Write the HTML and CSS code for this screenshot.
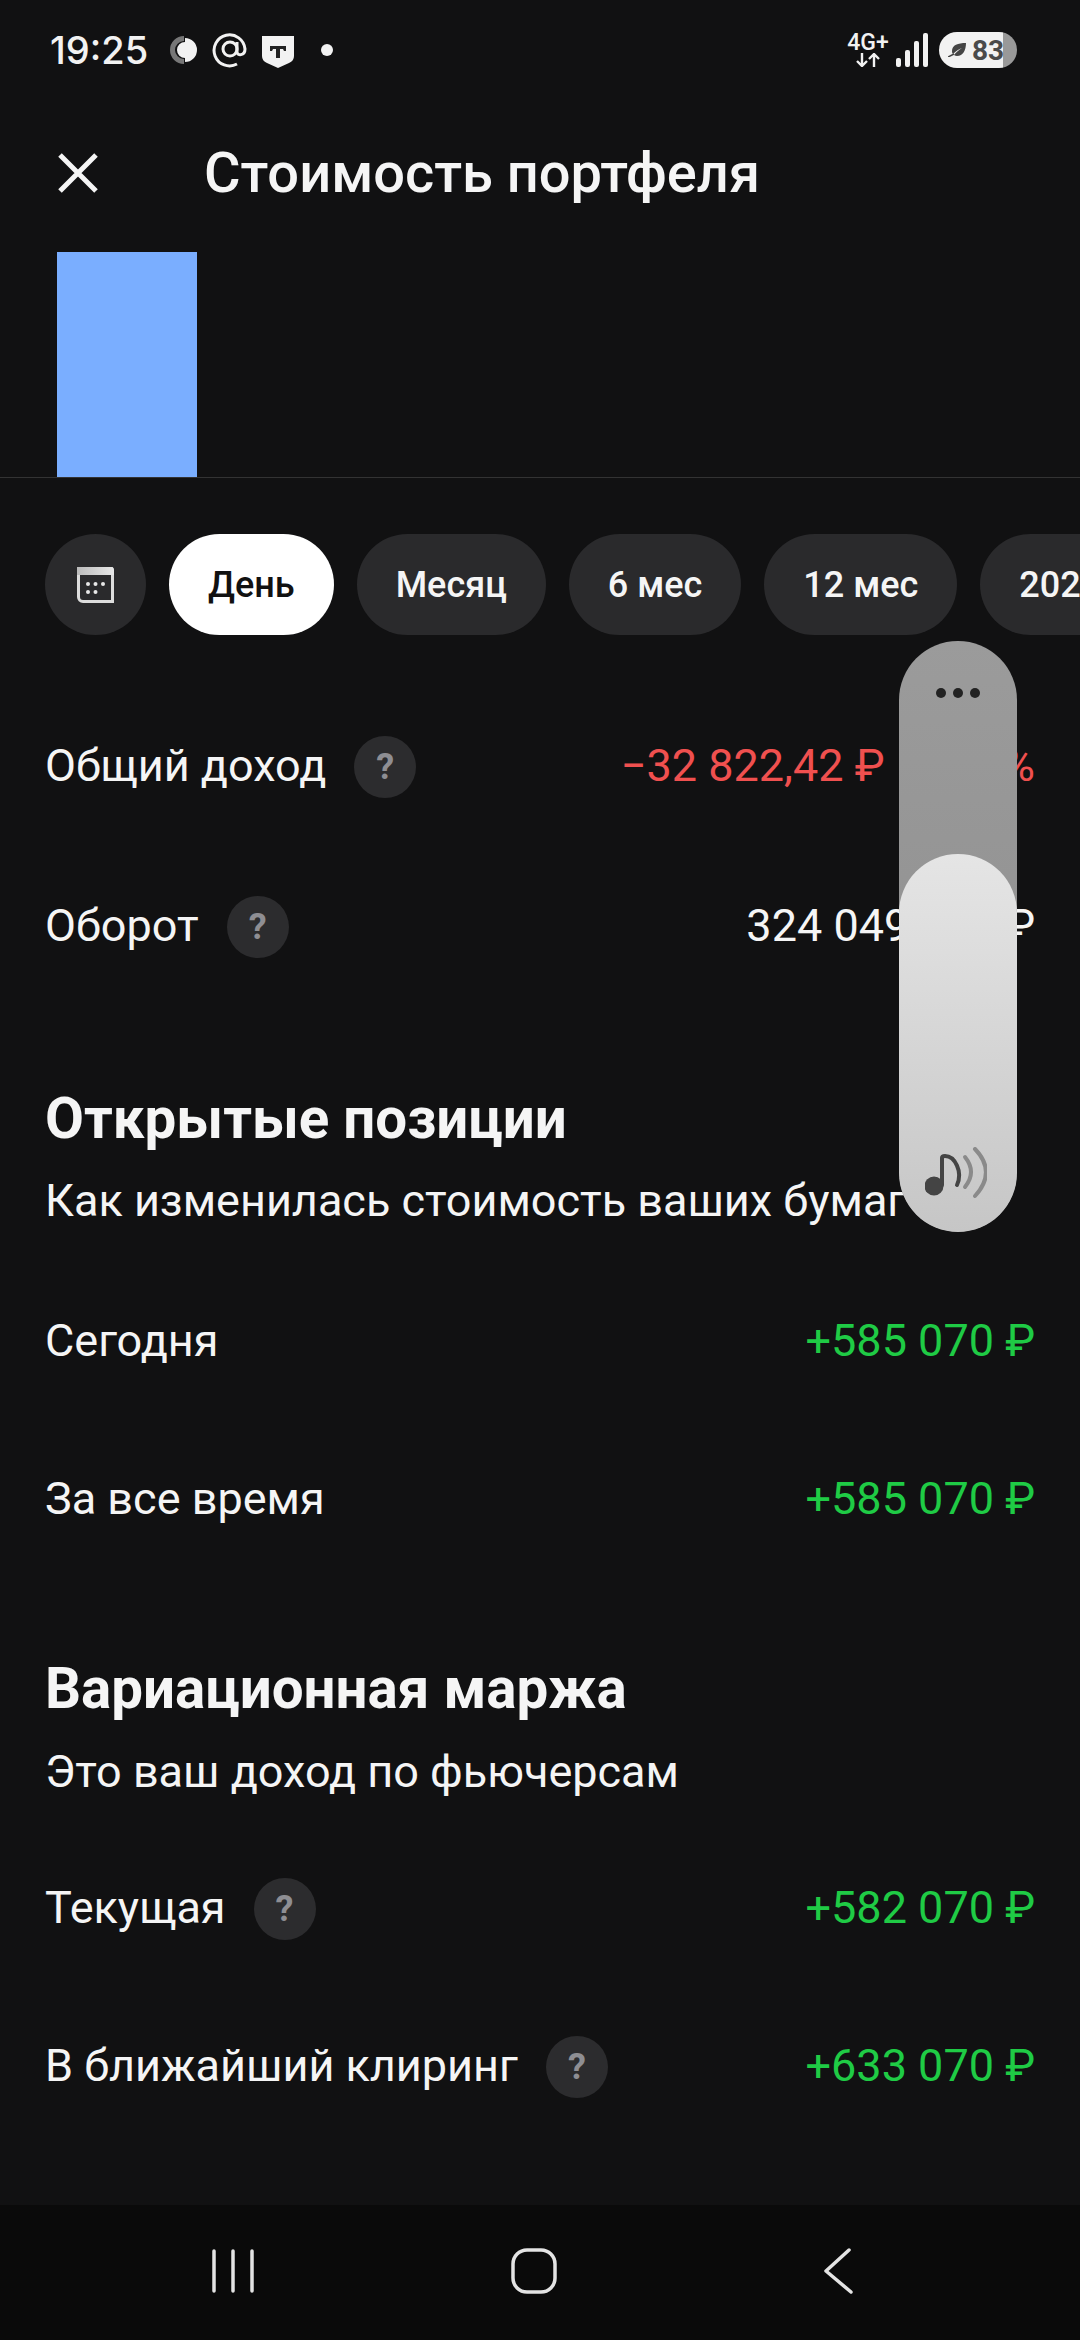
FILE: index.html
```html
<!DOCTYPE html>
<html lang="ru">
<head>
    <meta charset="UTF-8">
    <meta name="viewport" content="width=device-width, initial-scale=1.0">
    <title>Стоимость портфеля</title>
    <link rel="stylesheet" href="styles.css">
</head>
<body>
    <div class="screen">
        <div class="status">
            <span class="time">19:25</span>
            <svg class="st-ring" viewBox="0 0 28 28">
                <path d="M15 0a14 14 0 0 0 0 28v-5a9 9 0 0 1 0-18z" fill="#777"/>
                <path d="M16 2a12 12 0 0 1 0 24v-4a8 8 0 0 1 0-16z" fill="#f2f2f2"/>
            </svg>
            <svg class="st-at" viewBox="0 0 36 36" fill="none" stroke="#f2f2f2" stroke-width="3">
                <circle cx="18" cy="17" r="7"/>
                <path d="M25 10v10c0 4 8 4 8-3A15.500 15.500 0 1 0 25 32"/>
            </svg>
            <svg class="st-shield" viewBox="0 0 32 32">
                <path d="M0 0h32v20q0 5-5 7l-11 5-11-5q-5-2-5-7z" fill="#f2f2f2"/>
                <path d="M8 10h16v5h-2l-1-2h-3v9h-4v-9h-3l-1 2H8z" fill="#222"/>
            </svg>
            <span class="st-dot"></span>
            <div class="status-right">
                <div class="net">
                    <span class="net-label">4G+</span>
                    <svg class="net-arrows" viewBox="0 0 24 14" fill="none" stroke="#f2f2f2" stroke-width="2.400">
                        <path d="M6 0v12M1 8l5 5 5-5M18 14V2M13 6l5-5 5 5"/>
                    </svg>
                </div>
                <div class="signal">
                    <span class="bar-1"></span>
                    <span class="bar-2"></span>
                    <span class="bar-3"></span>
                    <span class="bar-4"></span>
                </div>
                <div class="battery">
                    <svg class="leaf" viewBox="0 0 18 14">
                        <path d="M18 0C10 0 4 2 4 8c0 1 0 2 1 3 3-3 6-5 9-6-3 2-6 4-8 7 1 .5 2 1 3 1 6 0 9-6 9-13z" fill="#444"/>
                        <path d="M6 11l-6 3" stroke="#444" stroke-width="1.500"/>
                    </svg>
                    <span>83</span>
                </div>
            </div>
        </div>

        <div class="topbar">
            <svg class="close" viewBox="0 0 40 40" fill="none" stroke="#f5f5f5" stroke-width="5">
                <path d="M2 2l36 36M38 2L2 38"/>
            </svg>
            <h1>Стоимость портфеля</h1>
        </div>

        <div class="chart">
            <div class="chart-bar"></div>
        </div>

        <div class="chips">
            <div class="chip chip-icon">
                <svg viewBox="0 0 37 36">
                    <defs>
                        <linearGradient id="calTop" x1="0" y1="0" x2="1" y2="0">
                            <stop offset="0" stop-color="#bbb"/>
                            <stop offset="1" stop-color="#e8e8e8"/>
                        </linearGradient>
                    </defs>
                    <path d="M1.500 2v28a4.500 4.500 0 0 0 4.500 4.500h29.500V3a2 2 0 0 0-2-2H1.500z" fill="none" stroke="#ddd" stroke-width="3"/>
                    <path d="M0 0h33a4 4 0 0 1 4 4v4H0z" fill="url(#calTop)"/>
                    <g fill="#e8e8e8">
                        <circle cx="11" cy="17" r="2"/>
                        <circle cx="18.500" cy="17" r="2"/>
                        <circle cx="26" cy="17" r="2"/>
                        <circle cx="11" cy="25" r="2"/>
                        <circle cx="18.500" cy="25" r="2"/>
                    </g>
                </svg>
            </div>
            <div class="chip chip-active">День</div>
            <div class="chip">Месяц</div>
            <div class="chip">6 мес</div>
            <div class="chip">12 мес</div>
            <div class="chip">2024</div>
        </div>

        <div class="rows rows-first">
            <div class="row">
                <div class="row-label">Общий доход <span class="help">?</span></div>
                <div class="red">−32 822,42 ₽<span class="percent">· 9,1 %</span></div>
            </div>
            <div class="row">
                <div class="row-label">Оборот <span class="help">?</span></div>
                <div>324 049,000 ₽</div>
            </div>
        </div>

        <div class="section">
            <h2>Открытые позиции</h2>
            <p>Как изменилась стоимость ваших бумаг</p>
        </div>
        <div class="rows">
            <div class="row">
                <div class="row-label">Сегодня</div>
                <div class="green">+585 070 ₽</div>
            </div>
            <div class="row">
                <div class="row-label">За все время</div>
                <div class="green">+585 070 ₽</div>
            </div>
        </div>

        <div class="section section-tight">
            <h2>Вариационная маржа</h2>
            <p>Это ваш доход по фьючерсам</p>
        </div>
        <div class="rows">
            <div class="row">
                <div class="row-label">Текущая <span class="help">?</span></div>
                <div class="green">+582 070 ₽</div>
            </div>
            <div class="row">
                <div class="row-label">В ближайший клиринг <span class="help">?</span></div>
                <div class="green">+633 070 ₽</div>
            </div>
        </div>

        <div class="navbar">
            <svg class="nav-menu" viewBox="0 0 42 44" fill="none" stroke="#e4e4e4" stroke-width="3.500" stroke-linecap="round">
                <path d="M2 2v40M21 2v40M40 2v40"/>
            </svg>
            <svg class="nav-home" viewBox="0 0 46 46" fill="none" stroke="#e4e4e4" stroke-width="3.500">
                <rect x="2" y="2" width="42" height="42" rx="14"/>
            </svg>
            <svg class="nav-back" viewBox="0 0 30 46" fill="none" stroke="#e4e4e4" stroke-width="3.500" stroke-linecap="round" stroke-linejoin="round">
                <path d="M26 2L3 23l25 21"/>
            </svg>
        </div>

        <!-- volume panel sits over the page -->
        <div class="volume">
            <div class="volume-dots"><span></span><span></span><span></span></div>
            <div class="volume-fill">
                <svg class="volume-icon" viewBox="0 0 62 52" fill="none" stroke-linecap="round">
                    <circle cx="9" cy="39" r="9.500" fill="#444"/>
                    <path d="M17 38V11q0-2 3-2c10 0 18 16 12 29" stroke="#444" stroke-width="4"/>
                    <path d="M40 10q12 15 0 30" stroke="#8a8a8a" stroke-width="4"/>
                    <path d="M50 2q22 23 0 47" stroke="#8a8a8a" stroke-width="4"/>
                </svg>
            </div>
        </div>
    </div>
</body>
</html>
```

FILE: styles.css
```css
* {
    box-sizing: border-box;
}
body {
    margin: 0;
    background-color: #111112;
    font-family: Roboto, "Noto Sans", sans-serif;
    color: #f5f5f5;
}
.screen {
    position: relative;
    width: 1080px;
    height: 2340px;
    overflow: hidden;
    display: flex;
    flex-direction: column;
    background-color: #111112;
}

/* status bar */
.status {
    height: 100px;
    flex-shrink: 0;
    display: flex;
    align-items: center;
    padding: 0 63px 0 50px;
}
.time {
    font-family: Inter, Roboto, sans-serif;
    font-size: 38px;
    font-weight: 500;
    color: #f2f2f2;
    width: 119px;
}
.st-ring {
    width: 28px;
    height: 28px;
    margin-right: 15px;
}
.st-at {
    width: 36px;
    height: 36px;
    margin-right: 14px;
}
.st-shield {
    width: 32px;
    height: 32px;
    margin-top: 4px;
}
.st-dot {
    width: 12px;
    height: 12px;
    margin-left: 27px;
    border-radius: 50%;
    background: #f2f2f2;
}
.status-right {
    margin-left: auto;
    display: flex;
    align-items: center;
}
.net {
    width: 42px;
    display: flex;
    flex-direction: column;
    align-items: center;
    margin-right: 7px;
}
.net-label {
    font-size: 23px;
    line-height: 20px;
    font-weight: 500;
    color: #f2f2f2;
}
.net-arrows {
    width: 24px;
    height: 14px;
}
.signal {
    display: flex;
    align-items: flex-end;
    gap: 4px;
    height: 34px;
    margin-right: 11px;
}
.signal span {
    width: 5px;
    background: #f2f2f2;
    border-radius: 2px;
}
.bar-1 { height: 9px; }
.bar-2 { height: 17px; }
.bar-3 { height: 26px; }
.bar-4 { height: 34px; }
.battery {
    width: 78px;
    height: 36px;
    border-radius: 18px;
    background: linear-gradient(to right, #f2f2f2 82%, #999 82%);
    display: flex;
    align-items: center;
    padding-left: 9px;
    gap: 6px;
    font-size: 28px;
    font-weight: 700;
    color: #4a4a4a;
}
.leaf {
    width: 18px;
    height: 14px;
}

/* header */
.topbar {
    height: 152px;
    flex-shrink: 0;
    display: flex;
    align-items: center;
    padding: 0 0 6px 58px;
}
.close {
    width: 40px;
    height: 40px;
}
h1 {
    margin: 0 0 0 106px;
    font-size: 56px;
    font-weight: 500;
    color: #f5f5f5;
}
.chart {
    height: 226px;
    flex-shrink: 0;
    padding-left: 57px;
    border-bottom: 1px solid #333;
}
.chart-bar {
    width: 140px;
    height: 225px;
    background-color: #7aaeff;
}

/* period chips */
.chips {
    display: flex;
    gap: 23px;
    padding: 56px 0 0 45px;
    flex-shrink: 0;
}
.chip {
    height: 101px;
    padding: 0 39px;
    flex-shrink: 0;
    display: flex;
    align-items: center;
    border-radius: 51px;
    background-color: #2a2a2c;
    font-size: 36px;
    font-weight: 500;
}
.chip-icon {
    width: 101px;
    padding: 0;
    justify-content: center;
}
.chip-icon svg {
    width: 37px;
    height: 36px;
}
.chip-active {
    background-color: #fff;
    color: #111;
}

/* rows */
.rows {
    flex-shrink: 0;
}
.rows-first {
    margin-top: 50px;
    margin-bottom: 2px;
}
.row {
    height: 158px;
    display: flex;
    align-items: center;
    justify-content: space-between;
    padding: 0 45px;
    font-size: 45px;
}
.rows-first .row {
    height: 160px;
}
.row-label {
    display: flex;
    align-items: center;
    gap: 28px;
}
.help {
    width: 62px;
    height: 62px;
    margin-top: 4px;
    display: flex;
    align-items: center;
    justify-content: center;
    border-radius: 50%;
    background-color: #2c2c2e;
    color: #8e8e93;
    font-size: 36px;
    font-weight: 700;
}
.percent {
    margin-left: 24px;
}
.red {
    color: #f0504f;
}
.green {
    color: #1fcb45;
}

/* section titles */
.section {
    flex-shrink: 0;
    margin-top: 82px;
    margin-bottom: 30px;
}
.section-tight {
    margin-bottom: 26px;
}
.section-tight p {
    padding-top: 1px;
}
.section h2 {
    margin: 0 0 22px;
    padding-left: 45px;
    font-size: 56.500px;
    line-height: 60px;
    font-weight: 700;
    color: #f5f5f5;
}
.section p {
    margin: 0;
    padding-left: 45px;
    font-size: 45px;
    line-height: 60px;
}

/* nav bar */
.navbar {
    margin-top: auto;
    height: 135px;
    flex-shrink: 0;
    display: flex;
    align-items: center;
    background-color: #0a0a0a;
    padding: 0 0 4px 212px;
}
.nav-menu {
    width: 42px;
    height: 44px;
}
.nav-home {
    width: 46px;
    height: 46px;
    margin-left: 257px;
}
.nav-back {
    width: 30px;
    height: 46px;
    margin-left: 266px;
}

/* volume panel */
.volume {
    position: absolute;
    left: 899px;
    top: 641px;
    width: 118px;
    height: 591px;
    border-radius: 59px;
    overflow: hidden;
    background: linear-gradient(to bottom, #9b9b9b, #8c8c8c);
}
.volume-dots {
    display: flex;
    justify-content: center;
    gap: 7px;
    padding-top: 47px;
}
.volume-dots span {
    width: 10px;
    height: 10px;
    border-radius: 50%;
    background: #222;
}
.volume-fill {
    position: absolute;
    left: 0;
    right: 0;
    bottom: 0;
    height: 378px;
    border-radius: 59px;
    background: linear-gradient(to bottom, #e5e5e5, #c6c6c6);
}
.volume-icon {
    position: absolute;
    left: 26px;
    bottom: 33px;
    width: 62px;
    height: 52px;
}
```
